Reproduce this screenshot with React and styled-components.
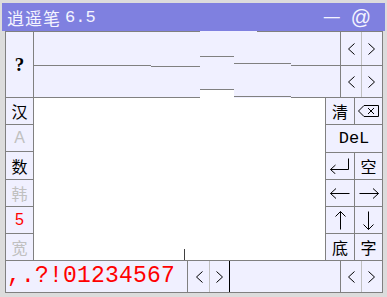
import React from "react";
import styled, { createGlobalStyle } from "styled-components";

const LINE = "#808080";
const SOFT = "#c0c0c0";
const CELL = "#f0f0ff";

const GlobalStyle = createGlobalStyle`
  html, body { margin: 0; padding: 0; background: #dcdcdc; }
  body { font-family: "Noto Sans CJK SC", sans-serif; }
  * { box-sizing: border-box; }
`;

// the odd staggered strips in the upper input area
const segments = [
  { w: 117, top: true, mid: 65, bottom: 97 },
  { w: 49, top: true, mid: 66, bottom: 97 },
  { w: 34, top: false, mid: 56, bottom: 89, white: true },
  { w: 23, top: false, mid: 63, bottom: 96 },
  { w: 34, top: true, mid: 63, bottom: 96 },
  { w: 49, top: true, mid: 65, bottom: 97 },
];

const leftKeys = [
  { t: "汉" },
  { t: "A", tone: "off", latin: true },
  { t: "数" },
  { t: "韩", tone: "off" },
  { t: "5", tone: "red", latin: true },
  { t: "宽", tone: "off" },
];

const Chevron = ({ dir }) => (
  <svg width="8" height="12" viewBox="0 0 8 12">
    <polyline
      points={dir === "left" ? "7.5,0.5 1.5,6 7.5,11.5" : "0.5,0.5 6.5,6 0.5,11.5"}
      fill="none"
      stroke="#000"
      strokeWidth="1"
    />
  </svg>
);

const HArrow = ({ dir }) => (
  <svg width="20" height="11" viewBox="0 0 20 11">
    <path
      d={dir === "left" ? "M0.5 5.5H19.5M6 0.5L0.5 5.5L6 10.5" : "M0.5 5.5H19.5M14 0.5L19.5 5.5L14 10.5"}
      fill="none"
      stroke="#000"
      strokeWidth="1"
    />
  </svg>
);

const VArrow = ({ dir }) => (
  <svg width="11" height="19" viewBox="0 0 11 19">
    <path
      d={dir === "up" ? "M5.5 0.5V18.5M0.5 5.5L5.5 0.5L10.5 5.5" : "M5.5 0.5V18.5M0.5 13.5L5.5 18.5L10.5 13.5"}
      fill="none"
      stroke="#000"
      strokeWidth="1"
    />
  </svg>
);

const EnterIcon = () => (
  <svg width="20" height="16" viewBox="0 0 20 16">
    <path d="M18.5 0.5V11.5H0.5M5.5 7L0.5 11.5L5.5 16" fill="none" stroke="#000" strokeWidth="1" />
  </svg>
);

const BackIcon = () => (
  <svg width="21" height="12" viewBox="0 0 21 12">
    <path d="M6 0.5H20.5V11.5H6L0.5 6Z" fill="none" stroke="#000" strokeWidth="1" />
    <path d="M10 3L16 9M16 3L10 9" fill="none" stroke="#000" strokeWidth="1" />
  </svg>
);

const App = () => (
  <>
    <GlobalStyle />
    <Window>
      <TitleBar>
        <TitleName>逍遥笔</TitleName>
        <TitleVer>6.5</TitleVer>
        <TitleTools>
          <Dash>—</Dash>
          <At>@</At>
        </TitleTools>
      </TitleBar>

      <Panel>
        <TopSection>
          <QCell>?</QCell>
          <Strips>
            {segments.map((s, i) => (
              <Segment key={i} $w={s.w}>
                <SegCap $on={s.top} />
                <SegBand $h={s.mid - 31} />
                <SegBand $h={s.bottom - s.mid} />
                <SegRest $white={s.white} />
              </Segment>
            ))}
          </Strips>
          <NavCol>
            <NavRow $h={34}>
              <NavBtn $w={21} $split><Chevron dir="left" /></NavBtn>
              <NavBtn $w={20}><Chevron dir="right" /></NavBtn>
            </NavRow>
            <NavRow $h={32}>
              <NavBtn $w={21} $split><Chevron dir="left" /></NavBtn>
              <NavBtn $w={20}><Chevron dir="right" /></NavBtn>
            </NavRow>
          </NavCol>
        </TopSection>

        <MiddleSection>
          <LeftCol>
            {leftKeys.map((k) => (
              <Key key={k.t} $tone={k.tone} $latin={k.latin}>{k.t}</Key>
            ))}
          </LeftCol>
          <Canvas>
            <Caret />
          </Canvas>
          <RightGrid>
            <Key>清</Key>
            <Key><BackIcon /></Key>
            <Key $wide $mono>DeL</Key>
            <Key><EnterIcon /></Key>
            <Key>空</Key>
            <Key><HArrow dir="left" /></Key>
            <Key><HArrow dir="right" /></Key>
            <Key><VArrow dir="up" /></Key>
            <Key><VArrow dir="down" /></Key>
            <Key>底</Key>
            <Key>字</Key>
          </RightGrid>
        </MiddleSection>

        <BottomRow>
          <Candidates>,.?!01234567</Candidates>
          <NavBtn $w={22} $split><Chevron dir="left" /></NavBtn>
          <NavBtn $w={19}><Chevron dir="right" /></NavBtn>
          <InputBox />
          <NavBtn $w={21} $split><Chevron dir="left" /></NavBtn>
          <NavBtn $w={20}><Chevron dir="right" /></NavBtn>
        </BottomRow>
      </Panel>
    </Window>
  </>
);

export default App;

const Window = styled.div`
  width: 387px;
  height: 297px;
  background: #dcdcdc;
  padding-top: 3px;
  display: flex;
  flex-direction: column;
  overflow: hidden;
`;

const TitleBar = styled.div`
  height: 28px;
  margin: 0 2px;
  padding-left: 5px;
  background: #7f80e0;
  color: #f4f4ff;
  display: flex;
  align-items: center;
`;

const TitleName = styled.span`
  font-size: 17px;
  letter-spacing: 1px;
  line-height: 1;
`;

const TitleVer = styled.span`
  font-family: "Liberation Mono", monospace;
  font-size: 17px;
  margin-left: 4px;
  line-height: 1;
`;

const TitleTools = styled.div`
  margin-left: auto;
  margin-right: 14px;
  display: flex;
  align-items: center;
  gap: 11px;
  font-family: "Liberation Sans", sans-serif;
`;

const Dash = styled.span`
  font-size: 16px;
`;

const At = styled.span`
  font-size: 20px;
`;

const Panel = styled.div`
  margin: 0 4px 0 5px;
  height: 262px;
  border: 1px solid ${LINE};
  border-top: none;
  background: ${CELL};
  display: flex;
  flex-direction: column;
`;

const TopSection = styled.div`
  height: 67px;
  display: flex;
  flex: none;
`;

const QCell = styled.div`
  width: 28px;
  border-top: 1px solid ${LINE};
  border-bottom: 1px solid ${LINE};
  border-right: 1px solid ${LINE};
  display: flex;
  align-items: center;
  justify-content: center;
  font-family: "Liberation Serif", serif;
  font-weight: bold;
  font-size: 19px;
  color: #000;
`;

const Strips = styled.div`
  width: 306px;
  display: flex;
`;

const Segment = styled.div`
  width: ${(p) => p.$w}px;
  display: flex;
  flex-direction: column;
`;

const SegCap = styled.div`
  height: 1px;
  flex: none;
  background: ${(p) => (p.$on ? LINE : "transparent")};
`;

const SegBand = styled.div`
  height: ${(p) => p.$h}px;
  flex: none;
  border-bottom: 1px solid ${LINE};
`;

const SegRest = styled.div`
  flex: 1;
  background: ${(p) => (p.$white ? "#fff" : "transparent")};
`;

const NavCol = styled.div`
  width: 42px;
  border-left: 1px solid ${LINE};
  border-top: 1px solid ${LINE};
  display: flex;
  flex-direction: column;
`;

const NavRow = styled.div`
  height: ${(p) => p.$h}px;
  border-bottom: 1px solid ${LINE};
  display: flex;
`;

const NavBtn = styled.div`
  width: ${(p) => p.$w}px;
  flex: none;
  display: flex;
  align-items: center;
  justify-content: center;
  border-right: ${(p) => (p.$split ? `1px solid ${SOFT}` : "none")};
`;

const MiddleSection = styled.div`
  height: 162px;
  display: flex;
  flex: none;
`;

const LeftCol = styled.div`
  width: 28px;
  border-right: 1px solid ${LINE};
  display: grid;
  grid-template-rows: 26px 26px 27px 26px 26px 26px;
  row-gap: 1px;
  background: ${LINE};
`;

const Key = styled.div`
  background: ${CELL};
  display: flex;
  align-items: center;
  justify-content: center;
  grid-column: ${(p) => (p.$wide ? "1 / 3" : "auto")};
  font-family: ${(p) =>
    p.$mono
      ? `"Liberation Mono", monospace`
      : p.$latin
      ? `"Liberation Sans", sans-serif`
      : `"Noto Sans CJK SC", sans-serif`};
  font-size: ${(p) => (p.$mono ? "17px" : "16px")};
  color: ${(p) => (p.$tone === "off" ? SOFT : p.$tone === "red" ? "#ff0000" : "#000")};
  line-height: 1;
`;

const Canvas = styled.div`
  width: 291px;
  background: #fff;
  position: relative;
`;

const Caret = styled.div`
  position: absolute;
  left: 150px;
  top: 151px;
  width: 1px;
  height: 11px;
  background: #404040;
`;

const RightGrid = styled.div`
  width: 57px;
  border-left: 1px solid ${LINE};
  display: grid;
  grid-template-columns: 28px 27px;
  grid-template-rows: 26px 27px 26px 26px 26px 26px;
  gap: 1px;
  background: ${LINE};
`;

const BottomRow = styled.div`
  height: 32px;
  border-top: 1px solid ${LINE};
  display: flex;
  flex: none;
`;

const Candidates = styled.div`
  width: 182px;
  flex: none;
  border-right: 1px solid ${LINE};
  display: flex;
  align-items: center;
  padding-left: 1px;
  font-family: "Liberation Mono", monospace;
  font-size: 23px;
  letter-spacing: 0.2px;
  color: #ff0000;
  line-height: 1;
`;

const InputBox = styled.div`
  width: 112px;
  flex: none;
  border-left: 1px solid #000;
  border-right: 1px solid ${LINE};
`;
